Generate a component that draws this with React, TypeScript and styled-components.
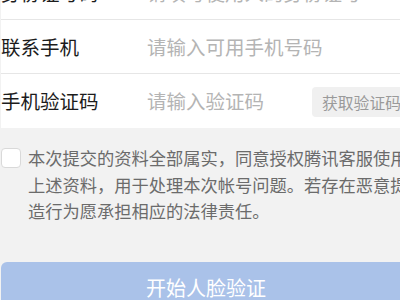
import React from 'react';
import styled, { createGlobalStyle } from 'styled-components';

const GlobalStyle = createGlobalStyle`
  html, body {
    margin: 0;
    padding: 0;
    width: 400px;
    height: 300px;
    overflow: hidden;
    background: #f2f2f2;
    font-family: "Noto Sans CJK SC", "Noto Sans", sans-serif;
  }
`;

const Page = styled.div`
  width: 410px;
  margin-top: -34px;
  margin-left: 1px;
`;

const Form = styled.div`
  background: #ffffff;
`;

const Row = styled.div<{ $last?: boolean }>`
  display: flex;
  align-items: center;
  height: 54px;
  box-sizing: border-box;
  border-bottom: ${(p) => (p.$last ? 'none' : '1px solid #e6e6e6')};
`;

const Label = styled.div`
  width: 146px;
  flex-shrink: 0;
  font-size: 19.5px;
  color: #1c1c1c;
  line-height: 1;
`;

const Placeholder = styled.div`
  flex: 1;
  font-size: 19.5px;
  color: #b4b4b4;
  line-height: 1;
  white-space: nowrap;
`;

const CodeButton = styled.div`
  flex-shrink: 0;
  height: 30px;
  padding: 0 10px;
  display: flex;
  align-items: center;
  background: #f0f0f0;
  border-radius: 4px;
  font-size: 15.8px;
  color: #9a9a9a;
  white-space: nowrap;
  margin-top: 2px;
`;

const Agreement = styled.div`
  display: flex;
  align-items: flex-start;
  gap: 7px;
  padding: 20px 0 0 0;
`;

const Checkbox = styled.div`
  width: 20px;
  height: 20px;
  flex-shrink: 0;
  box-sizing: border-box;
  border: 1px solid #d9d9d9;
  border-radius: 4px;
  background: #ffffff;
`;

const AgreementText = styled.p`
  margin: -3px 0 0 0;
  width: 382px;
  font-size: 17.25px;
  line-height: 26.5px;
  color: #6b6b6b;
`;

const SubmitButton = styled.div`
  margin-top: 37px;
  height: 52px;
  border-radius: 6px;
  background: #aac2e9;
  color: #ffffff;
  font-size: 20px;
  display: flex;
  align-items: center;
  justify-content: center;
`;

export default function App(): React.ReactElement {
  return (
    <>
      <GlobalStyle />
      <Page>
        <Form>
          <Row>
            <Label>身份证号码</Label>
            <Placeholder>请填写使用人的身份证号</Placeholder>
          </Row>
          <Row>
            <Label>联系手机</Label>
            <Placeholder>请输入可用手机号码</Placeholder>
          </Row>
          <Row $last>
            <Label>手机验证码</Label>
            <Placeholder>请输入验证码</Placeholder>
            <CodeButton>获取验证码</CodeButton>
          </Row>
        </Form>
        <Agreement>
          <Checkbox />
          <AgreementText>
            本次提交的资料全部属实，同意授权腾讯客服使用上述资料，用于处理本次帐号问题。若存在恶意提造行为愿承担相应的法律责任。
          </AgreementText>
        </Agreement>
        <SubmitButton>开始人脸验证</SubmitButton>
      </Page>
    </>
  );
}
